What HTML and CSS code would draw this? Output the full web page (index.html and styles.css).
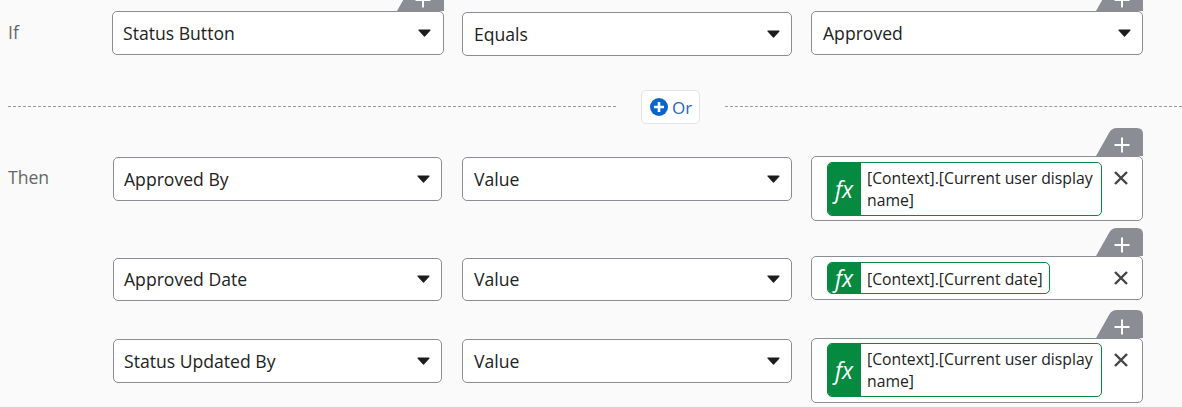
FILE: index.html
```html
<!DOCTYPE html>
<html lang="en">
<head>
<meta charset="utf-8">
<title>Rule editor</title>
<link rel="stylesheet" href="styles.css">
</head>
<body>
<svg class="defs" width="0" height="0" aria-hidden="true">
  <symbol id="caret" viewBox="0 0 13 8"><path d="M1 1h11L6.500 7z" fill="#1c1c1c" stroke="#1c1c1c" stroke-width="1.200" stroke-linejoin="round"/></symbol>
  <symbol id="tab" viewBox="0 0 47 28"><path d="M0 28 13 5Q15.500 0 21 0H41Q47 0 47 6V28Z" fill="#8a8d93"/><path d="M18.500 17H33.500M26 9.500V24.500" stroke="#fff" stroke-width="2" fill="none"/></symbol>
  <symbol id="close" viewBox="0 0 14 14"><path d="M1 1 13 13M13 1 1 13" stroke="#444" stroke-width="2.400" fill="none"/></symbol>
</svg>
<main class="page">
  <div class="row">
    <div class="label">If</div>
    <div class="select has-tab">
      <svg class="tab"><use href="#tab"/></svg>
      <span>Status Button</span><svg class="caret"><use href="#caret"/></svg>
    </div>
    <div class="select select-mid select-low">
      <span>Equals</span><svg class="caret"><use href="#caret"/></svg>
    </div>
    <div class="select select-last has-tab">
      <svg class="tab"><use href="#tab"/></svg>
      <span>Approved</span><svg class="caret"><use href="#caret"/></svg>
    </div>
  </div>

  <div class="divider">
    <span class="line line-left"></span>
    <button class="or-btn" type="button">
      <svg class="or-icon" viewBox="0 0 18 18"><circle cx="9" cy="9" r="9" fill="#0b63ce"/><path d="M9 4v10M4 9h10" stroke="#fff" stroke-width="2.600"/></svg>
      <span>Or</span>
    </button>
    <span class="line"></span>
  </div>

  <div class="row then-first">
    <div class="label">Then</div>
    <div class="select select-field select-low">
      <span>Approved By</span><svg class="caret"><use href="#caret"/></svg>
    </div>
    <div class="select select-mid select-low">
      <span>Value</span><svg class="caret"><use href="#caret"/></svg>
    </div>
    <div class="value value-tall has-tab">
      <svg class="tab"><use href="#tab"/></svg>
      <div class="chip"><span class="fx">fx</span><span class="chip-text">[Context].[Current user display name]</span></div>
      <svg class="close"><use href="#close"/></svg>
    </div>
  </div>

  <div class="row then-second">
    <div class="label"></div>
    <div class="select select-field select-lower">
      <span>Approved Date</span><svg class="caret"><use href="#caret"/></svg>
    </div>
    <div class="select select-mid select-lower">
      <span>Value</span><svg class="caret"><use href="#caret"/></svg>
    </div>
    <div class="value has-tab">
      <svg class="tab"><use href="#tab"/></svg>
      <div class="chip chip-short"><span class="fx">fx</span><span class="chip-text">[Context].[Current date]</span></div>
      <svg class="close"><use href="#close"/></svg>
    </div>
  </div>

  <div class="row then-third">
    <div class="label"></div>
    <div class="select select-field select-low">
      <span>Status Updated By</span><svg class="caret"><use href="#caret"/></svg>
    </div>
    <div class="select select-mid select-low">
      <span>Value</span><svg class="caret"><use href="#caret"/></svg>
    </div>
    <div class="value value-last has-tab">
      <svg class="tab"><use href="#tab"/></svg>
      <div class="chip"><span class="fx">fx</span><span class="chip-text">[Context].[Current user display name]</span></div>
      <svg class="close"><use href="#close"/></svg>
    </div>
  </div>
</main>
</body>
</html>
```
FILE: styles.css
```css
* { box-sizing: border-box; }

html, body {
  margin: 0;
  background: #fafafa;
}

body {
  font-family: "Open Sans", "Noto Sans", sans-serif;
  font-size: 17.6px;
  color: #222;
  overflow: hidden;
}

.defs { position: absolute; }

.page {
  width: 1182px;
  height: 407px;
  padding: 11px 0 0 8px;
}

.row {
  display: flex;
  align-items: flex-start;
}

.then-first { margin-top: 32px; }
.then-second { margin-top: 35px; }
.then-third { margin-top: 37px; }

.label {
  width: 104px;
  flex: none;
  padding-top: 10px;
  line-height: 22px;
  color: #666;
}

.select {
  position: relative;
  flex: none;
  display: flex;
  align-items: center;
  justify-content: space-between;
  width: 332px;
  height: 44px;
  padding: 0 12px 0 10px;
  background: #fff;
  border: 1px solid #8a8d93;
  border-radius: 5px;
  color: #222;
}

.select-field {
  width: 329px;
  margin-left: 1px;
  margin-right: 2px;
  padding-right: 11px;
}

.select-mid {
  width: 330px;
  margin-left: 18px;
  padding-left: 11px;
  padding-right: 11px;
}

.select-last {
  margin-left: 19px;
  padding-left: 11px;
  padding-right: 11px;
}

.select-low { margin-top: 1px; }

.select-lower {
  margin-top: 2px;
  height: 43px;
  padding-bottom: 2px;
}

.caret {
  width: 13px;
  height: 8px;
  flex: none;
}

.tab {
  position: absolute;
  right: -1px;
  bottom: calc(100% + 1px);
  width: 47px;
  height: 28px;
}

.has-tab { position: relative; }

.value {
  position: relative;
  flex: none;
  display: flex;
  align-items: flex-start;
  justify-content: space-between;
  width: 332px;
  margin-left: 19px;
  padding: 5px 14px 5px 15px;
  background: #fff;
  border: 1px solid #8a8d93;
  border-radius: 5px;
}

.value-tall { padding-bottom: 4px; }

.value-last { padding-top: 4px; }

.chip {
  display: flex;
  align-items: stretch;
  width: 275px;
  background: #fff;
  border: 1px solid #058a40;
  border-radius: 5px;
  overflow: hidden;
}

.chip-short { width: 223px; }

.chip-short .chip-text { padding-top: 5px; padding-bottom: 3px; }

.fx {
  flex: none;
  display: flex;
  align-items: center;
  justify-content: center;
  width: 34px;
  margin: -1px 0 -1px -1px;
  background: #058a40;
  color: #fff;
  font-size: 23px;
  font-style: italic;
  font-weight: 400;
}

.chip-text {
  padding: 4px 6px;
  font-size: 15.75px;
  line-height: 22px;
  color: #222;
}

.close {
  width: 14px;
  height: 14px;
  flex: none;
  margin-top: 9px;
}

.value-last .close { margin-top: 10px; }

.divider {
  display: flex;
  align-items: center;
  margin-top: 34px;
  height: 34px;
}

.line {
  flex: 1;
  margin-top: -1px;
  border-top: 1px dashed #999;
}

.line-left {
  flex: none;
  width: 608px;
}

.or-btn {
  display: flex;
  align-items: center;
  gap: 4px;
  width: 59px;
  height: 34px;
  margin: 0 25px;
  padding: 0 0 0 8px;
  background: #fff;
  border: 1px solid #e4e4e4;
  border-radius: 5px;
  font: inherit;
  font-size: 17px;
  color: #1f66c4;
}

.or-icon {
  width: 18px;
  height: 18px;
  flex: none;
}
```
